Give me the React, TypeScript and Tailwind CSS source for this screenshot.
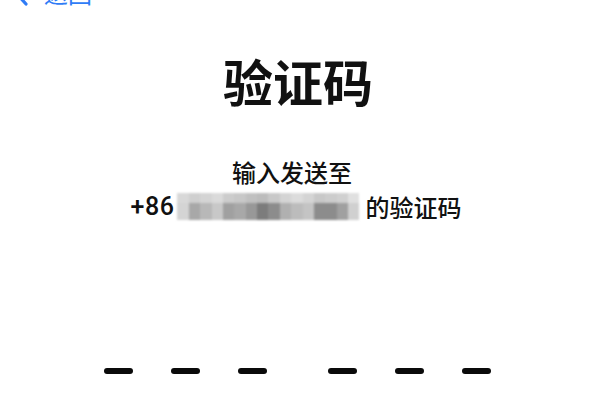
import React from "react";

const top = ["#d8d8d8","#cfcfcf","#d4d4d4","#dadada","#cccccc","#c8c8c8","#c0c0c0","#bcbcbc","#c8c8c8","#d4d4d4","#dcdcdc","#d4d4d4","#c8c8c8","#cccccc","#d0d0d0","#e0e0e0"];
const bottom = ["#d4d4d4","#a8a8a8","#b8b8b8","#c8c8c8","#a0a0a0","#a8a8a8","#989898","#7c7c7c","#8c8c8c","#b0b0b0","#bcbcbc","#c4c4c4","#8c8c8c","#8c8c8c","#a0a0a0","#d0d0d0"];

function Mosaic() {
  return (
    <div className="flex flex-col w-[182px] h-[27px] blur-[1px] overflow-hidden">
      <div className="flex h-[10px]">
        {top.map((c, i) => (
          <div key={i} className="flex-1" style={{ backgroundColor: c }} />
        ))}
      </div>
      <div className="flex h-[17px]">
        {bottom.map((c, i) => (
          <div key={i} className="flex-1" style={{ backgroundColor: c }} />
        ))}
      </div>
    </div>
  );
}

function Dash() {
  return <div className="w-[29px] h-[6px] rounded-full bg-[#0a0a0a]" />;
}

export default function App() {
  return (
    <div
      className="w-[600px] h-[420px] bg-white overflow-hidden flex flex-col items-center text-[#111111]"
      style={{ fontFamily: '"Noto Sans CJK SC", "Noto Sans", sans-serif' }}
    >
      <div className="self-start -mt-[19px] ml-[13px] flex items-center h-[24px] text-[#2f7cf6] text-[24px] leading-[24px]">
        <svg width="16" height="26" viewBox="0 0 16 26" className="shrink-0">
          <polyline points="13,2 3,13 13,24" fill="none" stroke="#2f7cf6" strokeWidth="3.2" strokeLinecap="round" strokeLinejoin="round" />
        </svg>
        <span className="ml-[15px]">返回</span>
      </div>

      <div className="mt-[50px] -ml-[4px] text-[50px] leading-[50px] font-bold">验证码</div>

      <div className="mt-[49px] flex flex-col items-center text-[24px] leading-[35px] font-medium">
        <div className="-ml-[16px]">输入发送至</div>
        <div className="flex items-center -ml-[8px]">
          <span
            className="text-[25px] font-medium tracking-[0.5px]"
            style={{ fontFamily: 'Roboto, "Liberation Sans", sans-serif' }}
          >
            +86
          </span>
          <div className="ml-[3px]"><Mosaic /></div>
          <span className="ml-[6px]">的验证码</span>
        </div>
      </div>

      <div className="mt-[144px] -ml-[6px] flex items-center">
        <div className="flex gap-[38px]">
          <Dash />
          <Dash />
          <Dash />
        </div>
        <div className="flex gap-[38px] ml-[61px]">
          <Dash />
          <Dash />
          <Dash />
        </div>
      </div>
    </div>
  );
}
